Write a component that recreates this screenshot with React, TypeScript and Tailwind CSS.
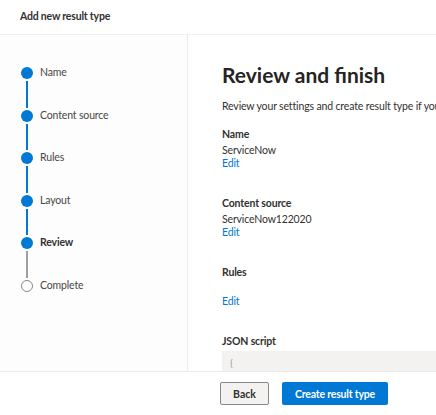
import type { FC } from "react";

const steps = [
  { label: "Name", state: "done" },
  { label: "Content source", state: "done" },
  { label: "Rules", state: "done" },
  { label: "Layout", state: "done" },
  { label: "Review", state: "current" },
  { label: "Complete", state: "todo" },
] as const;

const Stepper: FC = () => (
  <nav className="w-[188px] shrink-0 border-r border-[#edebe9] bg-[#fdfdfd] pl-[21px] pt-[32px]">
    {steps.map((step, i) => {
      const last = i === steps.length - 1;
      const nextTodo = !last && steps[i + 1].state === "todo";
      return (
        <div key={step.label} className={`flex ${last ? "" : "h-[42.5px]"}`}>
          <div className="flex w-3 flex-col items-center">
            {step.state === "todo" ? (
              <div className="h-3 w-3 shrink-0 rounded-full border border-[#8a8886] bg-white" />
            ) : (
              <div className="h-3 w-3 shrink-0 rounded-full bg-[#0078d4]" />
            )}
            {!last && (
              <div
                className={`my-[2px] w-[2px] flex-1 ${
                  nextTodo ? "bg-[#a19f9d]" : "bg-[#0078d4]"
                }`}
              />
            )}
          </div>
          <div
            className={`ml-[7px] flex h-3 items-center text-[10.5px] tracking-[-0.15px] ${
              step.state === "current"
                ? "font-bold text-[#323130]"
                : "text-[#484644]"
            }`}
          >
            {step.label}
          </div>
        </div>
      );
    })}
  </nav>
);

const Edit: FC<{ className?: string }> = ({ className = "" }) => (
  <a className={`block leading-[13px] text-[#0078d4] ${className}`}>Edit</a>
);

export default function App() {
  return (
    <div
      className="flex h-[415px] w-[436px] flex-col overflow-hidden bg-white text-[#323130]"
      style={{ fontFamily: 'Lato, "Noto Sans", sans-serif' }}
    >
      <header className="flex h-[35px] shrink-0 items-center border-b border-[#f0f0f0] pl-[20px] text-[10.5px] font-bold tracking-[-0.2px]">
        Add new result type
      </header>

      <div className="flex min-h-0 flex-1">
        <Stepper />

        <main className="flex min-w-0 flex-1 flex-col overflow-hidden pl-[34px] pt-[26px] text-[10.5px] tracking-[-0.15px]">
          <h1 className="whitespace-nowrap text-[21px] font-bold leading-[28px] tracking-normal text-[#252423]">
            Review and finish
          </h1>
          <p className="mt-[9px] whitespace-nowrap leading-[16px]">
            Review your settings and create result type if you're ready.
          </p>

          <h2 className="mt-[13px] font-bold leading-[14px]">Name</h2>
          <div className="mt-[3px] leading-[13px]">ServiceNow</div>
          <Edit />

          <h2 className="mt-[26px] font-bold leading-[14px]">Content source</h2>
          <div className="mt-[3px] leading-[13px]">ServiceNow122020</div>
          <Edit />

          <h2 className="mt-[26px] font-bold leading-[14px]">Rules</h2>
          <Edit className="mt-[16px]" />

          <h2 className="mt-[26px] font-bold leading-[14px]">JSON script</h2>
          <pre
            className="mt-[3px] min-h-0 flex-1 overflow-hidden bg-[#f3f2f1] px-[8px] pt-[4px] text-[10px] leading-[14px] text-[#a19f9d]"
            style={{ fontFamily: 'Lato, sans-serif' }}
          >
            {"{\n    \"type\": \"AdaptiveCard\","}
          </pre>
        </main>
      </div>

      <footer className="flex h-[44px] shrink-0 items-center gap-[13px] border-t border-[#edebe9] pl-[220px]">
        <button className="h-[23px] w-[49px] rounded-[2px] border border-[#8a8886] bg-[#f3f2f1] text-[10.5px] font-bold leading-[14px] text-[#323130]">
          Back
        </button>
        <button className="h-[23px] w-[106px] rounded-[2px] bg-[#0078d4] text-[10.5px] font-bold leading-[14px] tracking-[-0.2px] text-white">
          Create result type
        </button>
      </footer>
    </div>
  );
}
